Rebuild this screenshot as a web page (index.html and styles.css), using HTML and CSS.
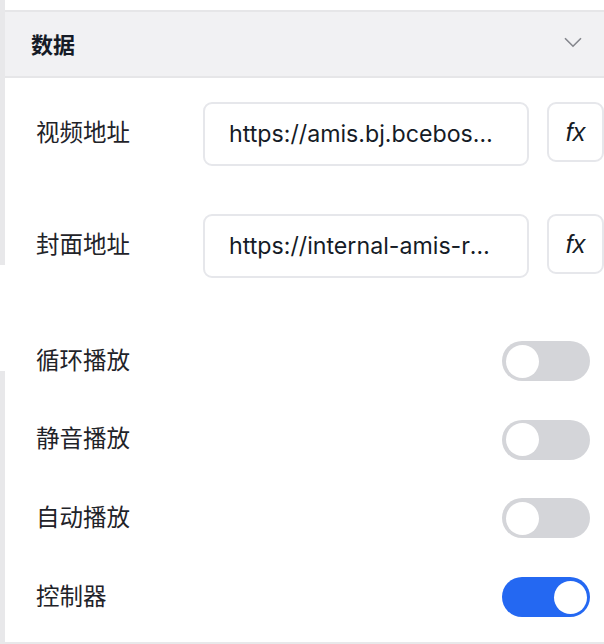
FILE: index.html
```html
<!DOCTYPE html>
<html lang="zh-CN">
<head>
<meta charset="utf-8">
<title>数据</title>
<link rel="stylesheet" href="styles.css">
</head>
<body>
<div class="page">
  <div class="rail">
    <div class="rail-top"></div>
    <div class="rail-gap"></div>
    <div class="rail-bottom"></div>
  </div>
  <div class="panel">
    <div class="panel-top"></div>
    <div class="section-head">
      <span class="section-title">数据</span>
      <svg class="chevron" width="18" height="11" viewBox="0 0 18 11" aria-hidden="true">
        <path d="M1 1.2 L9 9.2 L17 1.2" fill="none" stroke="#84868c" stroke-width="1.6"/>
      </svg>
    </div>
    <div class="section-body">
      <div class="field-row">
        <div class="label">视频地址</div>
        <div class="input"><span class="input-text">https://amis.bj.bcebos.com/amis/2019-12/1577157239810/big_buck_bunny.mp4</span></div>
        <div class="fx-btn">fx</div>
      </div>
      <div class="field-row field-row-2">
        <div class="label">封面地址</div>
        <div class="input"><span class="input-text">https://internal-amis-res.cdn.bcebos.com/images/2019-12/1577157239810/da6376bf988c.png</span></div>
        <div class="fx-btn">fx</div>
      </div>
      <div class="switches">
        <div class="switch-row">
          <div class="label">循环播放</div>
          <div class="switch"><div class="knob"></div></div>
        </div>
        <div class="switch-row">
          <div class="label">静音播放</div>
          <div class="switch"><div class="knob"></div></div>
        </div>
        <div class="switch-row">
          <div class="label">自动播放</div>
          <div class="switch"><div class="knob"></div></div>
        </div>
        <div class="switch-row">
          <div class="label">控制器</div>
          <div class="switch is-on"><div class="knob"></div></div>
        </div>
      </div>
    </div>
  </div>
</div>
</body>
</html>
```

FILE: styles.css
```css
html, body {
  margin: 0;
  padding: 0;
  background: #ffffff;
}
body {
  width: 604px;
  height: 644px;
  overflow: hidden;
  font-family: Inter, "Noto Sans CJK SC", sans-serif;
  color: #151b26;
}
.page {
  display: flex;
  width: 604px;
  height: 644px;
}
.rail {
  width: 5px;
  flex: 0 0 5px;
  display: flex;
  flex-direction: column;
}
.rail-top {
  height: 265px;
  background: #e8e8ea;
}
.rail-gap {
  height: 106px;
  background: #ffffff;
}
.rail-bottom {
  flex: 1;
  background: #e8e8ea;
}
.panel {
  flex: 1;
  display: flex;
  flex-direction: column;
  border-bottom: 2px solid #e8e8ea;
  height: 642px;
}
.panel-top {
  height: 10px;
}
.section-head {
  height: 64px;
  background: #f1f1f3;
  border-top: 2px solid #e6e6e8;
  border-bottom: 2px solid #e6e6e8;
  display: flex;
  align-items: center;
  justify-content: space-between;
  padding: 0 22px 0 26px;
}
.section-title {
  font-family: "Noto Sans CJK SC", sans-serif;
  font-size: 22px;
  font-weight: 700;
  color: #151b26;
  margin-top: -2px;
}
.chevron {
  display: block;
  margin-top: -3px;
}
.section-body {
  display: flex;
  flex-direction: column;
  padding-top: 24px;
}
.field-row {
  display: flex;
  align-items: flex-start;
  padding-left: 31px;
}
.field-row-2 {
  margin-top: 48px;
}
.label {
  font-family: "Noto Sans CJK SC", sans-serif;
  font-size: 23.5px;
  color: #1f2329;
  line-height: 32px;
}
.field-row .label {
  width: 167px;
  flex: 0 0 167px;
  padding-top: 13px;
}
.switch-row .label {
  margin-bottom: 5px;
}
.input {
  width: 326px;
  height: 64px;
  box-sizing: border-box;
  border: 2px solid #e6e7eb;
  border-radius: 9px;
  padding: 0 33px 0 24px;
  display: flex;
  align-items: center;
  overflow: hidden;
}
.input-text {
  display: block;
  white-space: nowrap;
  overflow: hidden;
  text-overflow: ellipsis;
  font-family: Inter, sans-serif;
  font-size: 23.2px;
  color: #151b26;
  width: 100%;
  margin-top: -1px;
}
.fx-btn {
  margin-left: 18px;
  width: 57px;
  height: 60px;
  box-sizing: border-box;
  border: 2px solid #e6e7eb;
  border-radius: 9px;
  display: flex;
  align-items: center;
  justify-content: center;
  font-family: "Liberation Sans", sans-serif;
  font-style: italic;
  font-size: 25px;
  color: #151b26;
  flex: 0 0 57px;
}
.switches {
  display: flex;
  flex-direction: column;
  gap: 38.7px;
  margin-top: 63px;
  padding-left: 31px;
  padding-right: 14px;
}
.switch-row {
  display: flex;
  align-items: center;
  justify-content: space-between;
  height: 40px;
}
.switch {
  width: 88px;
  height: 40px;
  border-radius: 20px;
  background: #d4d5d9;
  box-sizing: border-box;
  padding: 3.5px;
  display: flex;
  justify-content: flex-start;
}
.switch.is-on {
  background: #2468f2;
  justify-content: flex-end;
}
.knob {
  width: 33px;
  height: 33px;
  border-radius: 50%;
  background: #ffffff;
}
```
